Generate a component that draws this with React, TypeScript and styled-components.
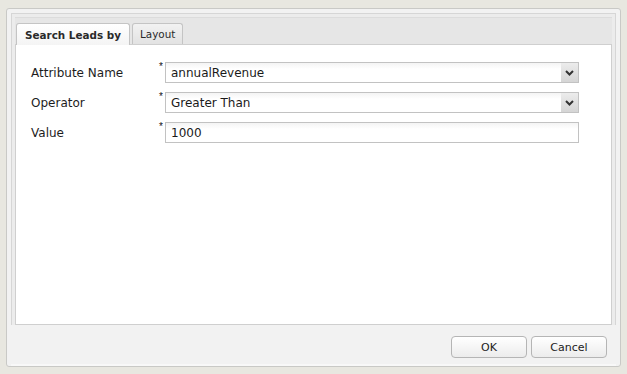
import React from "react";
import styled, { createGlobalStyle } from "styled-components";

const GlobalStyle = createGlobalStyle`
  html, body {
    margin: 0;
    padding: 0;
    background: #e8e7e0;
  }
  body {
    font-family: "DejaVu Sans", Verdana, sans-serif;
  }
`;

const Page = styled.div`
  width: 627px;
  height: 374px;
  padding: 8px 0 0 6px;
  box-sizing: border-box;
`;

const Dialog = styled.div`
  width: 615px;
  height: 359px;
  box-sizing: border-box;
  border: 1px solid #c9c9c6;
  border-radius: 3px;
  background: #f2f2f2;
  padding: 4px 4px 0 4px;
  display: flex;
  flex-direction: column;
`;

const TabPanel = styled.div`
  border: 1px solid #d6d6d6;
  border-bottom: none;
  background: #ececec;
  padding: 3px 3px 0 3px;
  display: flex;
  flex-direction: column;
  height: 312px;
  box-sizing: border-box;
`;

const TabStrip = styled.div`
  display: flex;
  align-items: flex-end;
  gap: 2px;
  height: 26px;
  padding: 0 0 0 1px;
  background: #e6e6e6;
  border-top: 1px solid #dcdcdc;
  border-bottom: 1px solid #cfcfcf;
`;

const Tab = styled.div<{ $active?: boolean }>`
  box-sizing: border-box;
  padding: 0 ${({ $active }) => ($active ? "8px" : "7px")};
  display: flex;
  align-items: center;
  font-family: "DejaVu Sans", Verdana, sans-serif;
  font-size: 10.4px;
  font-weight: ${({ $active }) => ($active ? "bold" : "normal")};
  color: #2a2a2a;
  border: 1px solid #c4c4c4;
  border-bottom: none;
  border-radius: 3px 3px 0 0;
  margin-bottom: ${({ $active }) => ($active ? "-1px" : "0")};
  background: ${({ $active }) =>
    $active
      ? "linear-gradient(#ffffff, #f4f4f4)"
      : "linear-gradient(#f2f2f2, #e2e2e2)"};
  height: ${({ $active }) => ($active ? "22px" : "21px")};
`;

const Content = styled.div`
  flex: 1;
  background: #ffffff;
  border: 1px solid #cfcfcf;
  border-top: none;
  padding: 17px 0 0 15px;
  display: flex;
  flex-direction: column;
  gap: 9px;
`;

const Row = styled.div`
  display: flex;
  align-items: center;
  height: 21px;
`;

const Label = styled.div`
  width: 129px;
  font-size: 12px;
  color: #1d1d1d;
`;

const Star = styled.span`
  width: 5px;
  align-self: flex-start;
  font-family: "Liberation Sans", Arial, sans-serif;
  font-size: 10px;
  color: #111;
  line-height: 10px;
  margin-left: -1px;
  margin-right: 1px;
`;

const Field = styled.div`
  width: 414px;
  height: 21px;
  box-sizing: border-box;
  border: 1px solid #c2c2c2;
  background: linear-gradient(#f4f4f4, #ffffff 6px);
  display: flex;
  align-items: center;
  padding-left: 5px;
  font-size: 12px;
  color: #1a1a1a;
`;

const FieldText = styled.span`
  flex: 1;
`;

const Trigger = styled.div`
  width: 17px;
  height: 19px;
  background: linear-gradient(#ececec, #d5d5d5);
  display: flex;
  align-items: center;
  justify-content: center;
`;

const Footer = styled.div`
  flex: 1;
  display: flex;
  justify-content: flex-end;
  align-items: flex-start;
  padding: 11px 9px 0 0;
  gap: 4px;
  border-bottom: 2px solid #f8f8f8;
`;

const Button = styled.button`
  width: 76px;
  height: 22px;
  border: 1px solid #b5b5b5;
  border-radius: 4px;
  background: linear-gradient(#ffffff, #ececec);
  font-family: "DejaVu Sans", Verdana, sans-serif;
  font-size: 11px;
  color: #222;
  padding: 0;
`;

const Chevron = () => (
  <svg width="9" height="6" viewBox="0 0 9 6">
    <path d="M1 1 L4.5 4.5 L8 1" fill="none" stroke="#333" strokeWidth="2" />
  </svg>
);

export default function App() {
  return (
    <>
      <GlobalStyle />
      <Page>
        <Dialog>
          <TabPanel>
            <TabStrip>
              <Tab $active>Search Leads by</Tab>
              <Tab>Layout</Tab>
            </TabStrip>
            <Content>
              <Row>
                <Label>Attribute Name</Label>
                <Star>*</Star>
                <Field>
                  <FieldText>annualRevenue</FieldText>
                  <Trigger>
                    <Chevron />
                  </Trigger>
                </Field>
              </Row>
              <Row>
                <Label>Operator</Label>
                <Star>*</Star>
                <Field>
                  <FieldText>Greater Than</FieldText>
                  <Trigger>
                    <Chevron />
                  </Trigger>
                </Field>
              </Row>
              <Row>
                <Label>Value</Label>
                <Star>*</Star>
                <Field>
                  <FieldText>1000</FieldText>
                </Field>
              </Row>
            </Content>
          </TabPanel>
          <Footer>
            <Button>OK</Button>
            <Button>Cancel</Button>
          </Footer>
        </Dialog>
      </Page>
    </>
  );
}
